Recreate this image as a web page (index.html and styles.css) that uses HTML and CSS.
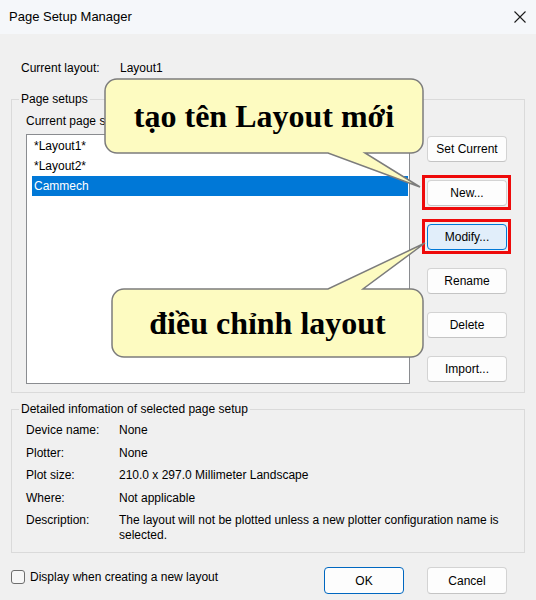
FILE: index.html
```html
<!DOCTYPE html>
<html lang="vi">
<head>
<meta charset="utf-8">
<title>Page Setup Manager</title>
<link rel="stylesheet" href="styles.css">
</head>
<body>
<div class="window">
  <div class="titlebar">
    <span class="title">Page Setup Manager</span>
    <svg class="close" width="12" height="12" viewBox="0 0 12 12"><path d="M0.5 0.5 L11.5 11.5 M11.5 0.5 L0.5 11.5" stroke="#1b1b1b" stroke-width="1.1" fill="none"/></svg>
  </div>
  <div class="content">
    <div class="current-row">
      <span class="cur-label">Current layout:</span>
      <span>Layout1</span>
    </div>

    <fieldset class="group setups">
      <legend>Page setups</legend>
      <div class="setups-body">
        <div class="list-col">
          <div class="list-label">Current page setup:</div>
          <div class="listbox">
            <div class="item">*Layout1*</div>
            <div class="item">*Layout2*</div>
            <div class="item selected">Cammech</div>
          </div>
        </div>
        <div class="btn-col">
          <button class="btn">Set Current</button>
          <button class="btn marked">New...</button>
          <button class="btn marked hover">Modify...</button>
          <button class="btn">Rename</button>
          <button class="btn">Delete</button>
          <button class="btn">Import...</button>
        </div>
      </div>
    </fieldset>

    <fieldset class="group details">
      <legend>Detailed infomation of selected page setup</legend>
      <div class="details-body">
        <span>Device name:</span><span>None</span>
        <span>Plotter:</span><span>None</span>
        <span>Plot size:</span><span>210.0 x 297.0 Millimeter Landscape</span>
        <span>Where:</span><span>Not applicable</span>
        <span>Description:</span><span>The layout will not be plotted unless a new plotter configuration name is selected.</span>
      </div>
    </fieldset>

    <div class="bottom-row">
      <label class="check">
        <span class="box"></span>
        <span>Display when creating a new layout</span>
      </label>
      <div class="actions">
        <button class="btn default">OK</button>
        <button class="btn">Cancel</button>
      </div>
    </div>
  </div>

  <svg class="callouts" width="536" height="600" viewBox="0 0 536 600">
    <path d="M117 79 H411 A12 12 0 0 1 423 91 V141 A12 12 0 0 1 411 153 H365 L420 187 L328 153 H117 A12 12 0 0 1 105 141 V91 A12 12 0 0 1 117 79 Z" fill="#fdfbc1" stroke="#7c7c7c" stroke-width="1.5"/>
    <path d="M124 289 H328 L425 243 L363 289 H411 A12 12 0 0 1 423 301 V345 A12 12 0 0 1 411 357 H124 A12 12 0 0 1 112 345 V301 A12 12 0 0 1 124 289 Z" fill="#fdfbc1" stroke="#7c7c7c" stroke-width="1.5"/>
  </svg>
  <div class="callout-text c1">tạo tên Layout mới</div>
  <div class="callout-text c2">điều chỉnh layout</div>
</div>
</body>
</html>
```

FILE: styles.css
```css
* { box-sizing: border-box; }
html, body { margin: 0; padding: 0; }
body {
  font-family: "Liberation Sans", Arial, sans-serif;
  font-size: 12px;
  color: #000;
  background: #f0f0f0;
}
.window {
  position: relative;
  width: 536px;
  height: 600px;
  background: #f0f0f0;
  overflow: hidden;
}
.titlebar {
  height: 34px;
  display: flex;
  align-items: center;
  justify-content: space-between;
  padding: 0 10px 0 9px;
  background: #f5f7fa;
}
.title { font-size: 13px; line-height: 16px; }
.close { display: block; }

.content { padding: 0 11px; }

.current-row {
  margin-top: 27px;
  padding-left: 10px;
  display: flex;
  line-height: 14px;
}
.cur-label { width: 99px; }

.group {
  margin: 0;
  padding: 0;
  min-width: 0;
  border: 1px solid #dadada;
}
.group legend {
  margin-left: 7px;
  padding: 0 2px;
  line-height: 14px;
}
.setups { margin-top: 17px; }
.setups-body {
  display: flex;
  padding: 8px 14px 8px 14px;
}
.list-col { width: 384px; }
.list-label { line-height: 14px; margin-bottom: 6px; white-space: nowrap; }
.listbox {
  height: 250px;
  background: #fff;
  border: 1px solid #8a8c90;
  padding: 1px 1px 0 5px;
}
.item {
  height: 20px;
  line-height: 20px;
  padding-left: 2px;
}
.item.selected { background: #0078d7; color: #fff; }

.btn-col {
  margin-left: 17px;
  padding-top: 22px;
  display: flex;
  flex-direction: column;
  gap: 18px;
}
.btn {
  width: 80px;
  height: 26px;
  font-family: "Liberation Sans", Arial, sans-serif;
  font-size: 12px;
  color: #000;
  background: #fdfdfd;
  border: 1px solid #d3d3d3;
  border-bottom-color: #c4c4c4;
  border-radius: 4px;
  padding: 0;
}
.btn.marked { position: relative; }
.btn.marked::after {
  content: "";
  position: absolute;
  left: -6px;
  right: -5px;
  top: -6px;
  bottom: -5px;
  border: 3px solid #ee0a0a;
}
.btn.hover { background: #e1eefa; border-color: #0078d7; }

.details { margin-top: 9px; }
.details-body {
  display: grid;
  grid-template-columns: 93px 1fr;
  row-gap: 7.5px;
  line-height: 15px;
  padding: 7px 14px 9px 14px;
}

.bottom-row {
  margin-top: 14px;
  display: flex;
  justify-content: space-between;
  align-items: flex-start;
  padding-right: 18px;
}
.check {
  margin-top: 3px;
  display: flex;
  align-items: center;
  gap: 5px;
  line-height: 14px;
}
.box {
  width: 14px;
  height: 14px;
  border: 1px solid #6e6e6e;
  border-radius: 3px;
  background: #f7f7f7;
}
.actions { display: flex; gap: 23px; }
.actions .btn { height: 27px; }
.btn.default { border-color: #0067c0; }

.callouts {
  position: absolute;
  left: 0;
  top: 0;
  pointer-events: none;
}
.callout-text {
  position: absolute;
  display: flex;
  align-items: center;
  justify-content: center;
  font-family: "Liberation Serif", "Times New Roman", serif;
  font-weight: bold;
  font-size: 32px;
  color: #000;
  white-space: nowrap;
}
.c1 { left: 105px; top: 79px; width: 318px; height: 74px; }
.c2 { left: 112px; top: 289px; width: 311px; height: 68px; }
```
